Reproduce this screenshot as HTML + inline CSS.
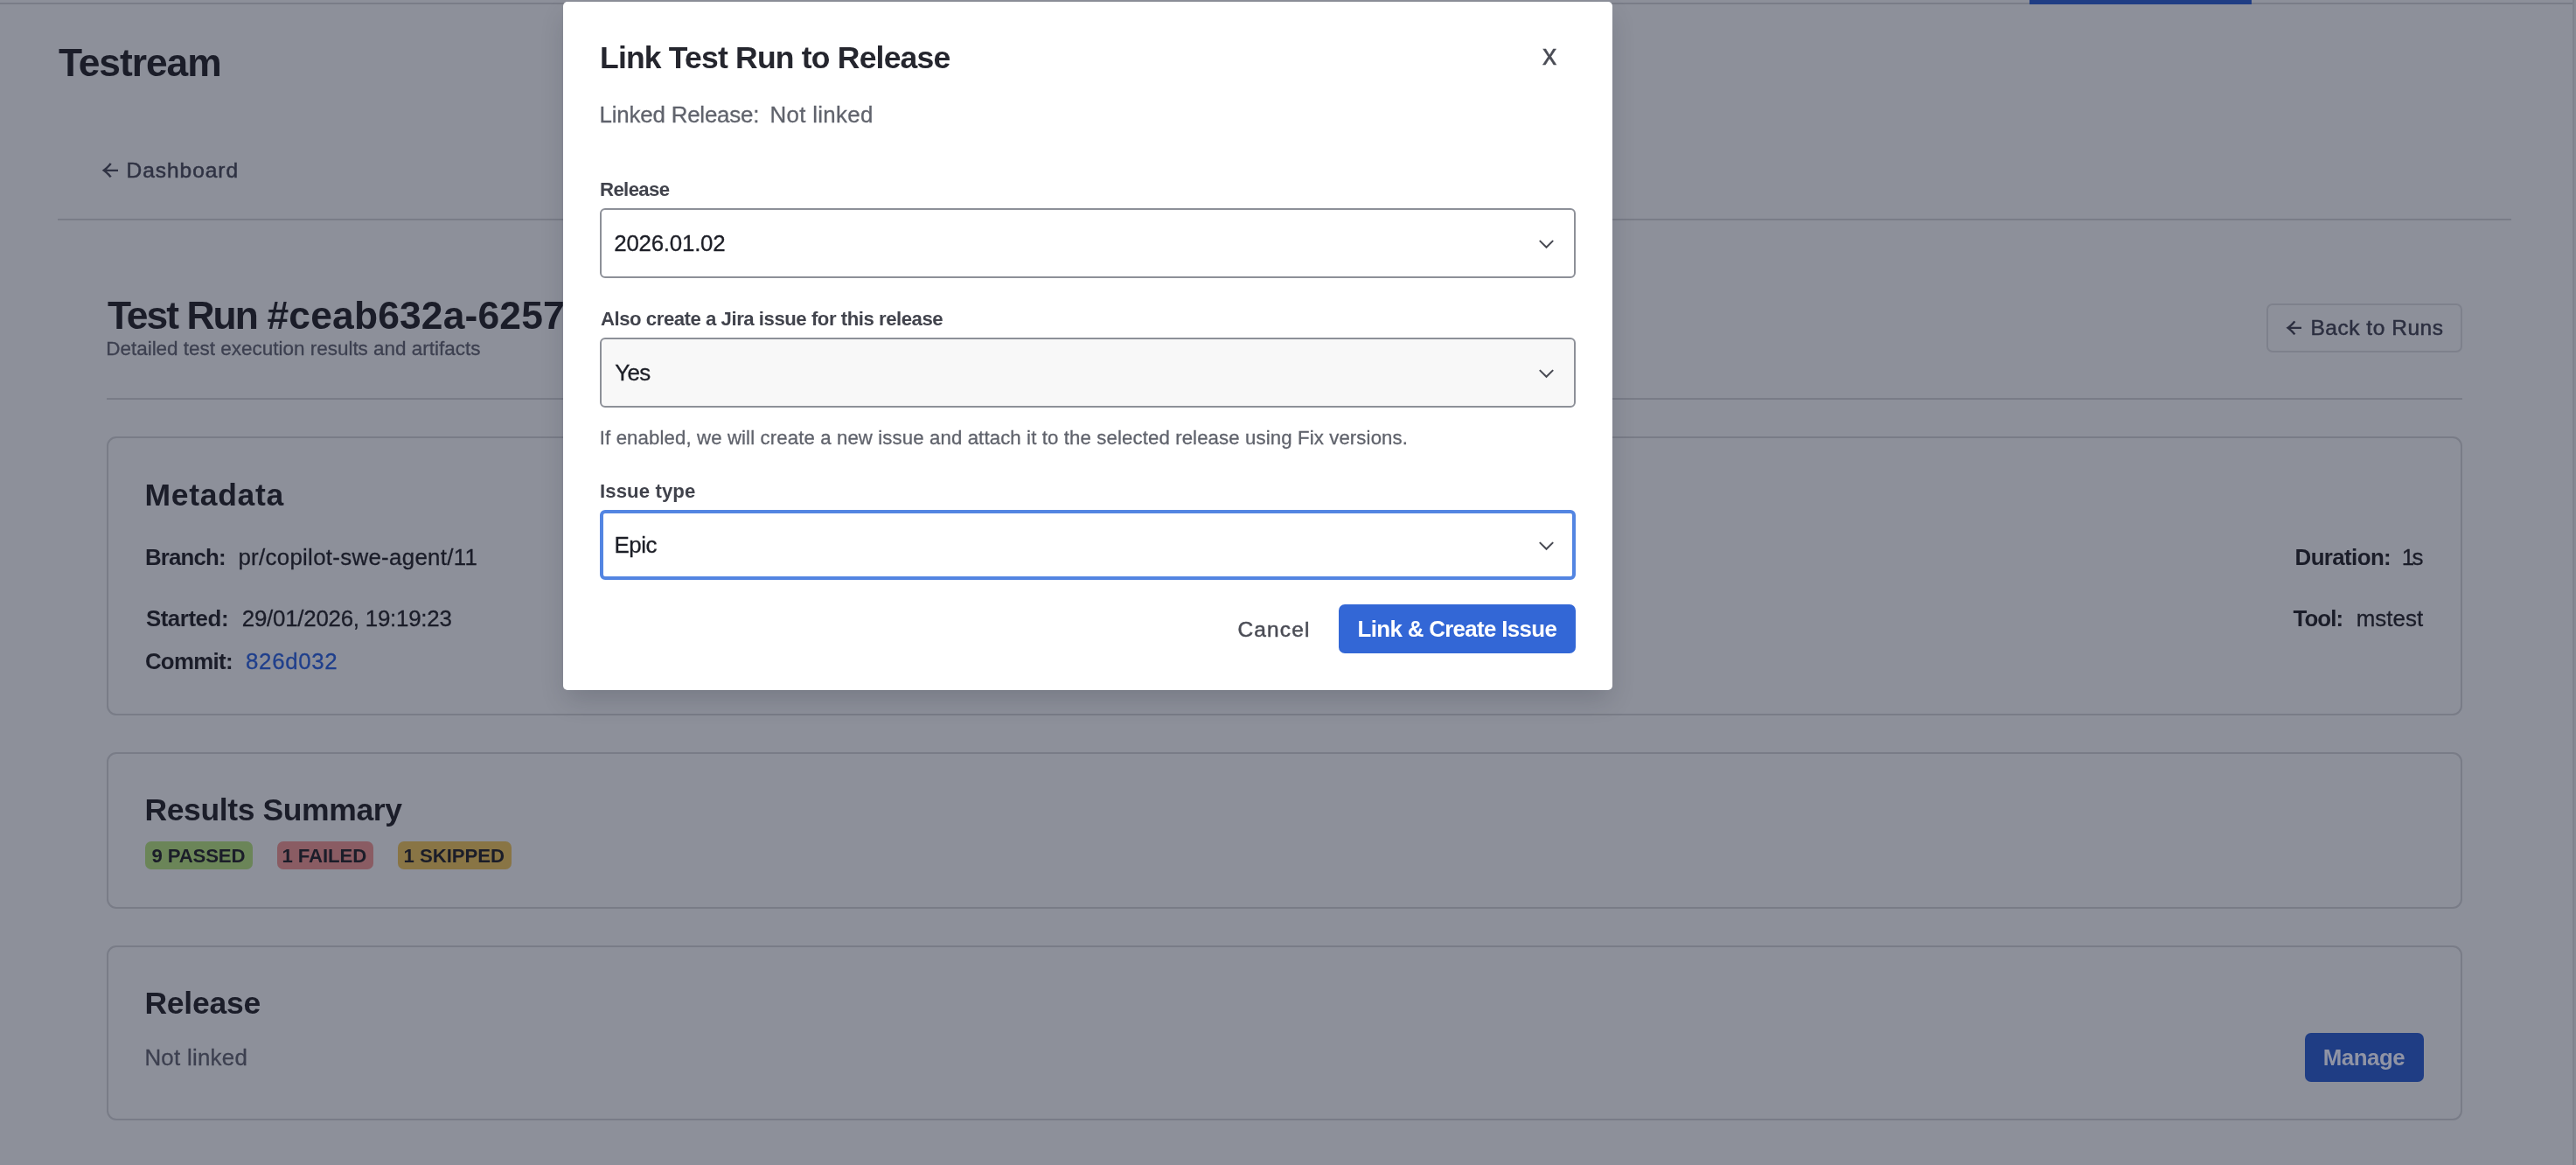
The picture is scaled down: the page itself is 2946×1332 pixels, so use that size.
<!DOCTYPE html>
<html lang="en">
<head>
<meta charset="utf-8">
<title>Testream – Test Run</title>
<style>
*{box-sizing:border-box;margin:0;padding:0}
html,body{width:2946px;height:1332px;overflow:hidden}
body{font-family:"Liberation Sans",sans-serif;background:#8d909a;position:relative}
.s,.t{position:absolute;display:block}
.t{white-space:nowrap;line-height:1;font-style:normal;text-decoration:none}
button{font:inherit;border:0;background:none;color:inherit;text-align:left}
#page,#dialog{will-change:transform}
/* page behind the overlay (colours already dimmed) */
#topline{left:0;top:3px;width:2942px;height:2px;background:#797c87}
#tab{left:2321px;top:0;width:254px;height:5px;background:#1f3d84}
#edge1{left:2942px;top:0;width:2px;height:1332px;background:#80838d}
#edge2{left:2944px;top:0;width:2px;height:1332px;background:#888b95}
#navline{left:66px;top:250px;width:2806px;height:2px;background:#797c87}
#hdrline{left:122px;top:455px;width:2694px;height:2px;background:#797c87}
#backbtn{left:2592px;top:347px;width:224px;height:56px;border:2px solid #7e818c;border-radius:7px}
.card{left:122px;width:2694px;border:2px solid #797c87;border-radius:11px}
#c1{top:499px;height:319px}
#c2{top:860px;height:179px}
#c3{top:1081px;height:200px}
.badge{top:100px;height:32px;border-radius:7px}
#bg1{left:42px;width:123px;background:#6b8558}
#bg2{left:193px;width:110px;background:#8a5c63}
#bg3{left:331px;width:130px;background:#897545}
#managebtn{left:2512px;top:98px;width:136px;height:56px;border-radius:7px;background:#1f3d84}
/* dialog */
#modal{left:644px;top:2px;width:1200px;height:787px;background:#fff;border-radius:5px;box-shadow:0 14px 30px -4px rgba(20,24,40,.19)}
.sel{left:42px;width:1116px;height:80px;border:2px solid #8d9098;border-radius:6px;background:#fff}
#sel1{top:236px}
#sel2{top:384px;background:#f8f8f8}
#sel3{top:581px;border:4px solid #5385e2;border-radius:6px}
.chev{left:1070px;top:32.25px;width:21px;height:14px}
#sel3 .chev{left:1068px;top:30.25px}
#primary{left:887px;top:689px;width:271px;height:56px;border-radius:7px;background:#3367d6}
</style>
</head>
<body>
<div id="page">
<header>
<i class="s" id="topline"></i><i class="s" id="tab"></i><i class="s" id="edge1"></i><i class="s" id="edge2"></i>
<a class="t" id="logo" style="left:66.90px;top:49.68px;font-size:44.38px;font-weight:700;letter-spacing:-1.032px;color:#1b1d29">Testream</a>
</header>
<nav>
<span class="t" id="dashA" style="left:116.15px;top:186.40px;width:18.85px;height:18.20px;overflow:hidden"><span style="position:absolute;left:-0.54px;top:-9.98px;font-family:'Noto Sans CJK SC','DejaVu Sans',sans-serif;font-size:34.76px;line-height:1;color:#2f3243">←</span></span>
<a class="t" id="dash" style="left:144.50px;top:182.56px;font-size:24.5px;font-weight:400;letter-spacing:0.971px;color:#2f3243;-webkit-text-stroke:0.5px #2f3243">Dashboard</a>
<i class="s" id="navline"></i>
</nav>
<main>
<h1><span class="t" id="h1" style="left:123.00px;top:338.68px;font-size:44.38px;font-weight:700;letter-spacing:-1.954px;color:#1b1d29">Test Run</span>
<span class="t" id="h1b" style="left:305.50px;top:338.68px;font-size:44.38px;font-weight:700;letter-spacing:0.170px;color:#1b1d29">#ceab632a-6257</span></h1>
<p class="t" id="sub" style="left:121.20px;top:388.30px;font-size:22.5px;font-weight:400;letter-spacing:-0.016px;color:#3d4050;-webkit-text-stroke:0.3px #3d4050">Detailed test execution results and artifacts</p>
<button class="s" id="backbtn" type="button"><span class="t" id="backA" style="left:19.90px;top:17.40px;width:18.50px;height:18.10px;overflow:hidden"><span style="position:absolute;left:-0.54px;top:-9.92px;font-family:'Noto Sans CJK SC','DejaVu Sans',sans-serif;font-size:34.55px;line-height:1;color:#2c2f40">←</span></span>
<span class="t" id="back" style="left:48.40px;top:13.56px;font-size:24.5px;font-weight:400;letter-spacing:0.536px;color:#2c2f40;-webkit-text-stroke:0.5px #2c2f40">Back to Runs</span></button>
<i class="s" id="hdrline"></i>
<section class="s card" id="c1">
<h2 class="t" id="meta" style="left:41.50px;top:47.75px;font-size:35.5px;font-weight:700;letter-spacing:0.696px;color:#1b1d29">Metadata</h2>
<strong class="t" id="br" style="left:41.90px;top:123.68px;font-size:25.89px;font-weight:700;letter-spacing:-0.825px;color:#1b1d29">Branch:</strong>
<span class="t" id="brv" style="left:148.40px;top:123.68px;font-size:25.89px;font-weight:400;letter-spacing:0.293px;color:#1b1d29;-webkit-text-stroke:0.3px #1b1d29">pr/copilot-swe-agent/11</span>
<strong class="t" id="st" style="left:42.90px;top:194.18px;font-size:25.89px;font-weight:700;letter-spacing:-0.450px;color:#1b1d29">Started:</strong>
<span class="t" id="stv" style="left:152.80px;top:194.18px;font-size:25.89px;font-weight:400;letter-spacing:-0.243px;color:#1b1d29;-webkit-text-stroke:0.3px #1b1d29">29/01/2026, 19:19:23</span>
<strong class="t" id="cm" style="left:41.90px;top:242.98px;font-size:25.89px;font-weight:700;letter-spacing:-0.702px;color:#1b1d29">Commit:</strong>
<a class="t" id="cmv" style="left:157.10px;top:242.98px;font-size:25.89px;font-weight:400;letter-spacing:0.626px;color:#1f3f8c;-webkit-text-stroke:0.3px #1f3f8c">826d032</a>
<strong class="t" id="du" style="left:2500.60px;top:123.98px;font-size:25.89px;font-weight:700;letter-spacing:-0.608px;color:#1b1d29">Duration:</strong>
<span class="t" id="duv" style="left:2622.80px;top:123.98px;font-size:25.89px;font-weight:400;letter-spacing:-2.740px;color:#1b1d29;-webkit-text-stroke:0.3px #1b1d29">1s</span>
<strong class="t" id="to" style="left:2498.50px;top:193.98px;font-size:25.89px;font-weight:700;letter-spacing:-0.921px;color:#1b1d29">Tool:</strong>
<span class="t" id="tov" style="left:2570.65px;top:193.98px;font-size:25.89px;font-weight:400;letter-spacing:0.068px;color:#1b1d29;-webkit-text-stroke:0.3px #1b1d29">mstest</span>
</section>
<section class="s card" id="c2">
<h2 class="t" id="rs" style="left:41.40px;top:46.85px;font-size:35.5px;font-weight:700;letter-spacing:-0.375px;color:#1b1d29">Results Summary</h2>
<span class="s badge" id="bg1"><span class="t" id="b1" style="left:7.50px;top:5.92px;font-size:22.19px;font-weight:700;letter-spacing:-0.168px;color:#1b1d29">9 PASSED</span></span>
<span class="s badge" id="bg2"><span class="t" id="b2" style="left:5.50px;top:5.92px;font-size:22.19px;font-weight:700;letter-spacing:-0.096px;color:#1b1d29">1 FAILED</span></span>
<span class="s badge" id="bg3"><span class="t" id="b3" style="left:6.50px;top:5.92px;font-size:22.19px;font-weight:700;letter-spacing:-0.048px;color:#1b1d29">1 SKIPPED</span></span>
</section>
<section class="s card" id="c3">
<h2 class="t" id="rel" style="left:41.40px;top:46.95px;font-size:35.5px;font-weight:700;letter-spacing:-0.212px;color:#1b1d29">Release</h2>
<p class="t" id="nl" style="left:41.40px;top:114.18px;font-size:25.89px;font-weight:400;letter-spacing:0.259px;color:#3d4050;-webkit-text-stroke:0.3px #3d4050">Not linked</p>
<button class="s" id="managebtn" type="button"><span class="t" id="mg" style="left:20.80px;top:15.78px;font-size:25.89px;font-weight:700;letter-spacing:-0.509px;color:#9094a5">Manage</span></button>
</section>
</main>
</div>
<div id="dialog" role="dialog" aria-modal="true">
<div class="s" id="modal">
<h3 class="t" id="mt" style="left:42.00px;top:46.95px;font-size:35.5px;font-weight:700;letter-spacing:-0.795px;color:#25262e">Link Test Run to Release</h3>
<button class="t" id="mx" style="left:1120.00px;top:44.50px;font-size:32.6px;font-weight:400;letter-spacing:0.000px;color:#4a4c55;-webkit-text-stroke:0.4px #4a4c55">x</button>
<span class="t" id="lr" style="left:41.50px;top:117.48px;font-size:25.89px;font-weight:400;letter-spacing:-0.187px;color:#60636c;-webkit-text-stroke:0.3px #60636c">Linked Release:</span>
<span class="t" id="lrv" style="left:236.50px;top:117.48px;font-size:25.89px;font-weight:400;letter-spacing:0.314px;color:#60636c;-webkit-text-stroke:0.3px #60636c">Not linked</span>
<label class="t" id="l1" style="left:42.00px;top:204.37px;font-size:22.19px;font-weight:700;letter-spacing:-0.633px;color:#41434c">Release</label>
<label class="t" id="l2" style="left:43.00px;top:352.12px;font-size:22.19px;font-weight:700;letter-spacing:-0.477px;color:#41434c">Also create a Jira issue for this release</label>
<p class="t" id="hp" style="left:41.80px;top:488.37px;font-size:22.19px;font-weight:400;letter-spacing:0.121px;color:#60636c;-webkit-text-stroke:0.3px #60636c">If enabled, we will create a new issue and attach it to the selected release using Fix versions.</p>
<label class="t" id="l3" style="left:42.00px;top:549.37px;font-size:22.19px;font-weight:700;letter-spacing:0.091px;color:#41434c">Issue type</label>
<button class="t" id="cc" style="left:771.50px;top:706.06px;font-size:24.5px;font-weight:400;letter-spacing:1.116px;color:#4a4c55;-webkit-text-stroke:0.5px #4a4c55">Cancel</button>
<div class="s sel" id="sel1" role="combobox"><span class="t" id="s1" style="left:14.25px;top:25.98px;font-size:25.89px;font-weight:400;letter-spacing:-0.235px;color:#1d1f27;-webkit-text-stroke:0.3px #1d1f27">2026.01.02</span><svg class="s chev" viewBox="0 0 21 14"><path d="M2.8 3.1L10.5 10.8L18.2 3.1" fill="none" stroke="#484a53" stroke-width="2.05"/></svg></div>
<div class="s sel" id="sel2" role="combobox"><span class="t" id="s2" style="left:15.25px;top:25.98px;font-size:25.89px;font-weight:400;letter-spacing:-0.636px;color:#1d1f27;-webkit-text-stroke:0.3px #1d1f27">Yes</span><svg class="s chev" viewBox="0 0 21 14"><path d="M2.8 3.1L10.5 10.8L18.2 3.1" fill="none" stroke="#484a53" stroke-width="2.05"/></svg></div>
<div class="s sel" id="sel3" role="combobox"><span class="t" id="s3" style="left:12.50px;top:23.88px;font-size:25.89px;font-weight:400;letter-spacing:-0.432px;color:#1d1f27;-webkit-text-stroke:0.3px #1d1f27">Epic</span><svg class="s chev" viewBox="0 0 21 14"><path d="M2.8 3.1L10.5 10.8L18.2 3.1" fill="none" stroke="#484a53" stroke-width="2.05"/></svg></div>
<button class="s" id="primary" type="button"><span class="t" id="lc" style="left:21.60px;top:15.88px;font-size:25.89px;font-weight:700;letter-spacing:-0.665px;color:#ffffff">Link &amp; Create Issue</span></button>
</div>
</div>
<script>
/* keep the 2946px design filling the window if the viewport is not 2946 CSS px wide */
(function(){var w=window.innerWidth||2946;if(Math.abs(w-2946)>1){document.documentElement.style.zoom=w/2946;}})();
</script>
</body>
</html>
